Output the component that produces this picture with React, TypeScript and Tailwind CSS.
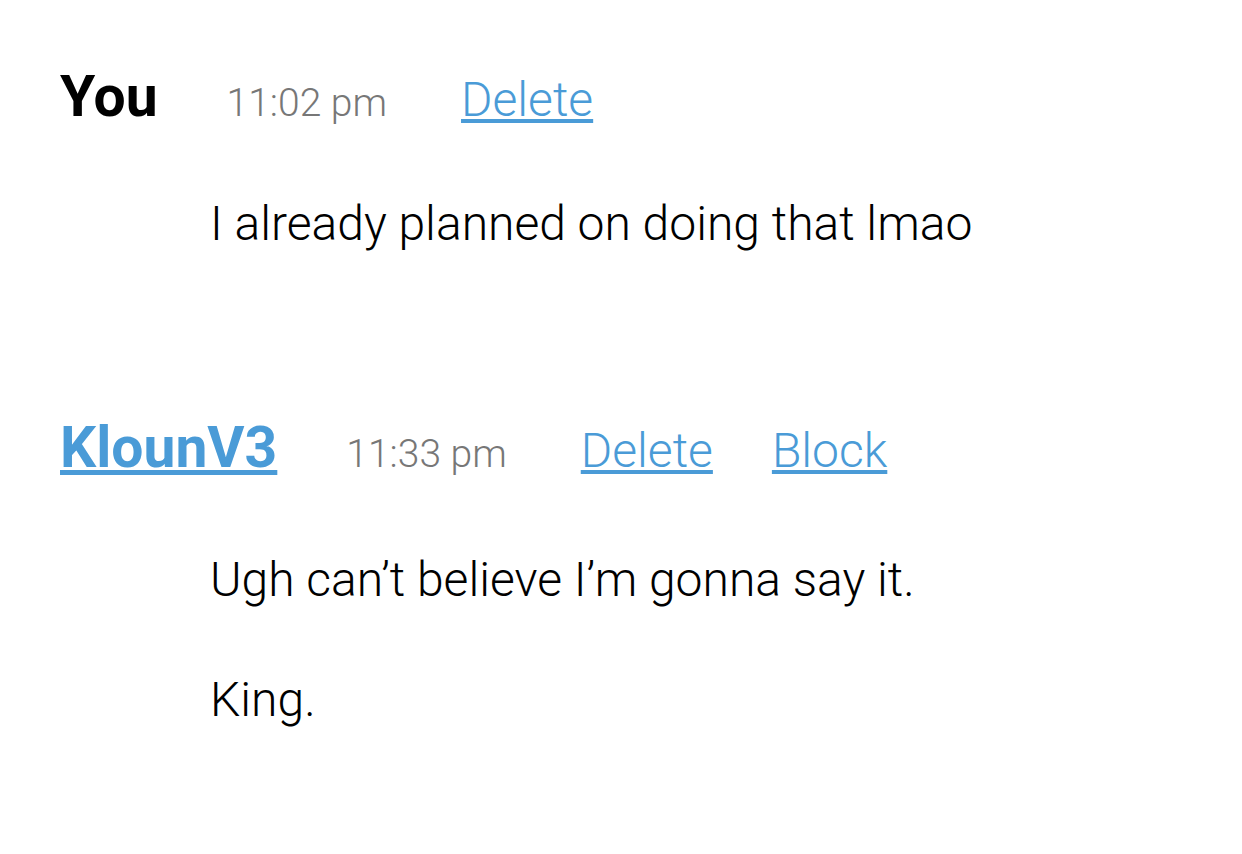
export default function App() {
  return (
    <div className="w-[1242px] h-[854px] bg-white overflow-hidden" style={{ fontFamily: "Roboto, 'Liberation Sans', sans-serif" }}>
      <div className="pl-[60px] pt-[68px]">
        <div className="flex items-baseline">
          <span className="text-[57px] font-bold text-black leading-none">You</span>
          <span className="ml-[69px] text-[39px] font-light text-[#777777] leading-none">11:02 pm</span>
          <a className="ml-[74px] text-[48px] font-light text-[#4a9bd7] underline leading-none">Delete</a>
        </div>
        <div className="pl-[150px] mt-[75px] text-[48px] font-light text-black leading-none">I already planned on doing that lmao</div>
      </div>
      <div className="pl-[60px] mt-[171px]">
        <div className="flex items-baseline">
          <a className="text-[57px] font-bold text-[#4a9bd7] underline leading-none">KlounV3</a>
          <span className="ml-[69px] text-[39px] font-light text-[#777777] leading-none">11:33 pm</span>
          <a className="ml-[74px] text-[48px] font-light text-[#4a9bd7] underline leading-none">Delete</a>
          <a className="ml-[59px] text-[48px] font-light text-[#4a9bd7] underline leading-none">Block</a>
        </div>
        <div className="pl-[150px] mt-[80px] text-[48px] font-light text-black leading-none">Ugh can’t believe I’m gonna say it.</div>
        <div className="pl-[150px] mt-[72px] text-[48px] font-light text-black leading-none">King.</div>
      </div>
    </div>
  );
}
